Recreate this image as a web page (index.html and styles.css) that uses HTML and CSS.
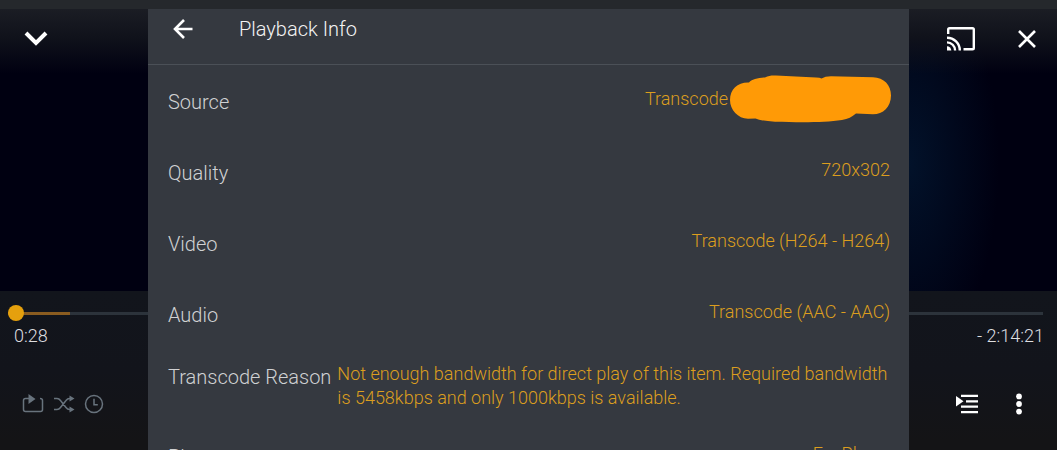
FILE: index.html
```html
<!DOCTYPE html>
<html lang="en">
<head>
<meta charset="utf-8">
<meta name="viewport" content="width=device-width, initial-scale=1">
<title>Playback Info</title>
<link rel="stylesheet" href="styles.css">
</head>
<body>
<main class="player">
  <header class="topbar">
    <button class="icon-btn" type="button" aria-label="Minimize">
      <svg width="24" height="16" viewBox="0 0 24 16"><path d="M2 2L12 12L22 2" fill="none" stroke="#fff" stroke-width="4"/></svg>
    </button>
    <div class="topbar-actions">
      <button class="icon-btn" type="button" aria-label="Cast">
        <svg width="30" height="26" viewBox="0 0 30 26" fill="none" stroke="#fff" stroke-width="2.400"><path d="M2.200 8V3.500Q2.200 2.200 3.500 2.200H26.500Q27.800 2.200 27.800 3.500V22Q27.800 23.300 26.500 23.300H17.500"/><path d="M1 11.700A12.800 12.800 0 0 1 13.800 24.500M1 16.400A8.100 8.100 0 0 1 9.100 24.500"/><path d="M1 20.200A4.300 4.300 0 0 1 5.300 24.500H1Z" fill="#fff" stroke="none"/></svg>
      </button>
      <button class="icon-btn" type="button" aria-label="Close">
        <svg width="20" height="20" viewBox="0 0 20 20"><path d="M2 2L18 18M18 2L2 18" stroke="#fff" stroke-width="2.600"/></svg>
      </button>
    </div>
  </header>

  <section class="controls" aria-label="Playback controls">
    <input class="seek" type="range" min="0" max="8089" value="0" aria-label="Position">
    <div class="times"><span>0:28</span><span>- 2:14:21</span></div>
    <div class="buttons">
      <div class="group group-left">
        <button class="icon-btn" type="button" aria-label="Repeat">
          <svg width="22" height="20" viewBox="0 0 22 20"><path d="M7 4.500H3.500Q1.500 4.500 1.500 6.500V15.500Q1.500 17.500 3.500 17.500H18.500Q20.500 17.500 20.500 15.500V6.500Q20.500 4.500 18 4.500" fill="none" stroke="#68737d" stroke-width="1.500"/><path d="M6.500 0L13.500 5L6.500 10Z" fill="#68737d"/></svg>
        </button>
        <button class="icon-btn" type="button" aria-label="Shuffle">
          <svg width="22" height="20" viewBox="0 0 22 20"><path d="M1 4.500H4Q6 4.500 7.500 6.500L13 13.500Q14.500 15.500 16.500 15.500H18M1 15.500H4Q6 15.500 7.500 13.500L13 6.500Q14.500 4.500 16.500 4.500H18" fill="none" stroke="#68737d" stroke-width="1.500"/><path d="M16.500 1.500L21.500 4.500L16.500 7.500ZM16.500 12.500L21.500 15.500L16.500 18.500Z" fill="#68737d"/></svg>
        </button>
        <button class="icon-btn" type="button" aria-label="Sleep timer">
          <svg width="20" height="20" viewBox="0 0 20 20" fill="none" stroke="#68737d" stroke-width="1.500"><circle cx="10" cy="10" r="8.500"/><path d="M10 4.800V10.800H13.800"/></svg>
        </button>
      </div>
      <div class="group group-right">
        <button class="icon-btn" type="button" aria-label="Play queue">
          <svg width="24" height="20" viewBox="0 0 24 20" fill="#fff"><path d="M1 2L8.500 7.300L1 12.600Z"/><path d="M6 .8H23V3H6ZM11 6.200H23V8.400H11ZM6 11.600H23V13.800H6ZM6 17H23V19.200H6Z"/></svg>
        </button>
        <button class="icon-btn" type="button" aria-label="More">
          <svg width="8" height="24" viewBox="0 0 8 24" fill="#fff"><circle cx="4" cy="4.400" r="2.900"/><circle cx="4" cy="12" r="2.900"/><circle cx="4" cy="19.600" r="2.900"/></svg>
        </button>
      </div>
    </div>
  </section>

  <section class="panel" role="dialog" aria-labelledby="panel-title">
    <header class="panel-head">
      <button class="icon-btn" type="button" aria-label="Back">
        <svg width="22" height="22" viewBox="0 0 22 22"><path d="M20.500 11H3M12 2L3 11L12 20" fill="none" stroke="#fff" stroke-width="2.600"/></svg>
      </button>
      <h1 class="panel-title" id="panel-title">Playback Info</h1>
    </header>
    <dl class="info">
      <div class="row">
        <dt>Source</dt>
        <dd class="source">Transcode
          <svg class="redaction" width="162" height="48" viewBox="0 0 162 48" aria-hidden="true"><path d="M19 7.500C21 4.500 29 2.500 35 2.500C39 .500 42 .200 46 .500L86 2.500Q90 2.700 91.500 3.500Q95 1.300 101 1.300L143 2.200C154 2.500 161 10 161 20.500C161 32 153 39.300 143 39.300L126 38.500C122 42 118 44 112 45C95 47.500 72 47.500 45 46.700Q31 46 25.500 43.500L18 43.800C8 43.500 0 35 0 25C0 14 8 7 19 7.500Z" fill="#ff9a06"/></svg>
        </dd>
      </div>
      <div class="row"><dt>Quality</dt><dd>720x302</dd></div>
      <div class="row"><dt>Video</dt><dd>Transcode (H264 - H264)</dd></div>
      <div class="row"><dt>Audio</dt><dd>Transcode (AAC - AAC)</dd></div>
      <div class="row"><dt>Transcode Reason</dt><dd>Not enough bandwidth for direct play of this item. Required bandwidth is 5458kbps and only 1000kbps is available.</dd></div>
      <div class="row"><dt>Player</dt><dd>ExoPlayer</dd></div>
    </dl>
  </section>
</main>
</body>
</html>
```
FILE: styles.css
```css
* { box-sizing: border-box; }

body {
  margin: 0;
  background: #000010;
  color: #dedee0;
  font-family: Roboto, "Liberation Sans", Arial, sans-serif;
  font-weight: 300;
}

.player {
  position: relative;
  display: flex;
  flex-direction: column;
  justify-content: space-between;
  height: 100vh;
  overflow: hidden;
  border-top: 9px solid #25282c;
  background:
    linear-gradient(#1b1d24 0, #10121b 28px, transparent 65px),
    radial-gradient(ellipse 90px 200px at 86% 35%, #02122a, transparent),
    #000011;
}

.icon-btn {
  display: flex;
  padding: 0;
  border: 0;
  background: none;
}

.topbar,
.topbar-actions,
.times,
.buttons,
.group {
  display: flex;
  align-items: center;
  justify-content: space-between;
}

.topbar { padding: 17px 20px 0 24px; }
.topbar-actions { gap: 41px; }

.controls {
  height: 159px;
  padding: 14px 0 0;
  background: linear-gradient(#12151c, #12141b 80px, #141416 150px);
}

.seek {
  display: block;
  width: calc(100% - 22px);
  height: 16px;
  margin: 0 14px 0 8px;
  appearance: none;
  background: linear-gradient(90deg, #8a5c20 62px, #2c333b 62px) center / 100% 3px no-repeat;
}

.seek::-webkit-slider-thumb {
  appearance: none;
  width: 16px;
  height: 16px;
  border-radius: 50%;
  background: #e5a00d;
}

.times {
  padding: 3px 13px 0 14px;
  font-size: 18px;
  line-height: 24px;
}

.buttons { padding: 44px 34px 0 22px; }
.group-left { gap: 9px; }
.group-right { gap: 36px; }

.panel {
  position: absolute;
  inset: 0 14%;
  overflow: hidden;
  background: #353940;
}

.panel-head {
  display: flex;
  align-items: center;
  gap: 45px;
  height: 56px;
  padding: 0 24px 16px;
  border-bottom: 1px solid #4b5057;
}

.panel-title {
  margin: 0;
  color: #f4f4f4;
  font-size: 20px;
  font-weight: 300;
  line-height: 24px;
}

.info { margin: 1px 0 0; }

.row {
  display: grid;
  grid-template-columns: auto 1fr;
  align-content: center;
  align-items: start;
  column-gap: 6px;
  min-height: 71px;
  padding: 0 19px 0 20px;
}

dt {
  color: #d0d1d3;
  font-size: 20px;
  line-height: 30px;
}

dd {
  justify-self: end;
  margin: 0;
  color: #dc9e1e;
  font-size: 18px;
  line-height: 24px;
}

.source {
  display: flex;
  align-items: center;
  height: 24px;
  margin-right: -2px;
  gap: 2px;
}
```
